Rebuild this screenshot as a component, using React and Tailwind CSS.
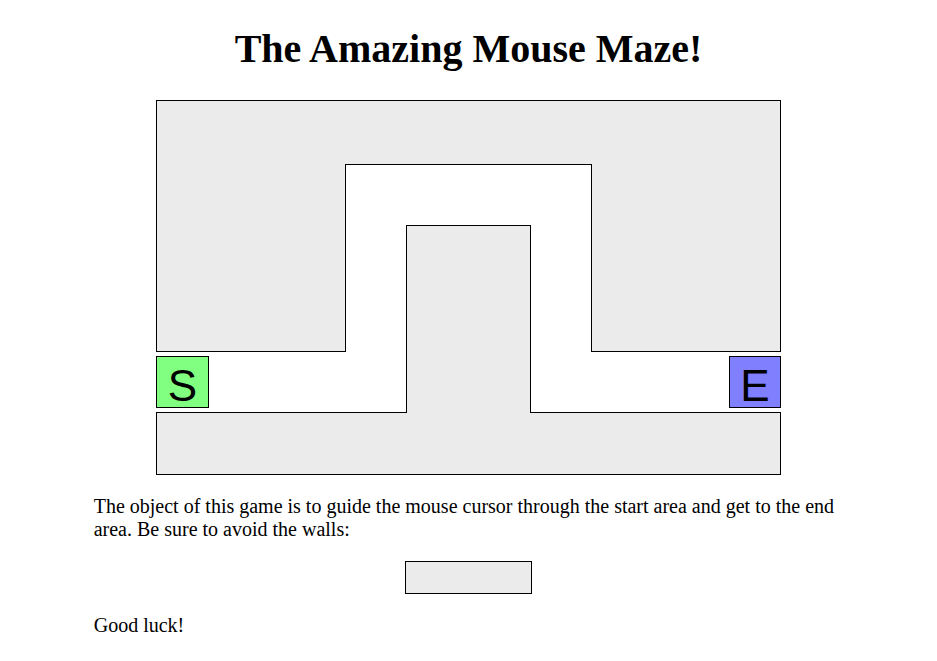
export default function App() {
  return (
    <div className="min-h-[661px] bg-white text-black" style={{ fontFamily: '"Liberation Serif", "Times New Roman", serif' }}>
      <div className="w-[80%] mx-auto flex flex-col pt-[27px]">
        <h1 className="text-[40px] font-bold text-center leading-[44px] m-0">The Amazing Mouse Maze!</h1>
        <div className="relative w-[625px] h-[375px] mx-auto mt-[29px]">
          <div className="absolute left-0 top-0 w-[625px] h-[252px] border border-black bg-[#ebebeb]" />
          <div className="absolute left-[189px] top-[64px] w-[247px] h-[188px] border-t border-l border-r border-black bg-white" />
          <div className="absolute left-0 top-[312px] w-[625px] h-[63px] border border-black bg-[#ebebeb]" />
          <div className="absolute left-[250px] top-[125px] w-[125px] h-[188px] border-t border-l border-r border-black bg-[#ebebeb]" />
          <div
            className="absolute left-0 top-[256px] w-[53px] h-[52px] border border-black bg-[#80ff80] text-center text-[44px] leading-[50px] pt-[4px] box-border"
            style={{ fontFamily: '"Liberation Sans", Arial, sans-serif' }}
          >
            S
          </div>
          <div
            className="absolute left-[573px] top-[256px] w-[52px] h-[52px] border border-black bg-[#8080ff] text-center text-[44px] leading-[50px] pt-[4px] box-border"
            style={{ fontFamily: '"Liberation Sans", Arial, sans-serif' }}
          >
            E
          </div>
        </div>
        <p className="text-[20px] leading-[23px] mt-[20px]">
          The object of this game is to guide the mouse cursor through the start area and get to the end area. Be sure to avoid the walls:
        </p>
        <div className="w-[127px] h-[33px] mx-auto mt-[20px] border border-black bg-[#ebebeb]" />
        <p className="text-[20px] leading-[23px] mt-[20px]">Good luck!</p>
      </div>
    </div>
  );
}
